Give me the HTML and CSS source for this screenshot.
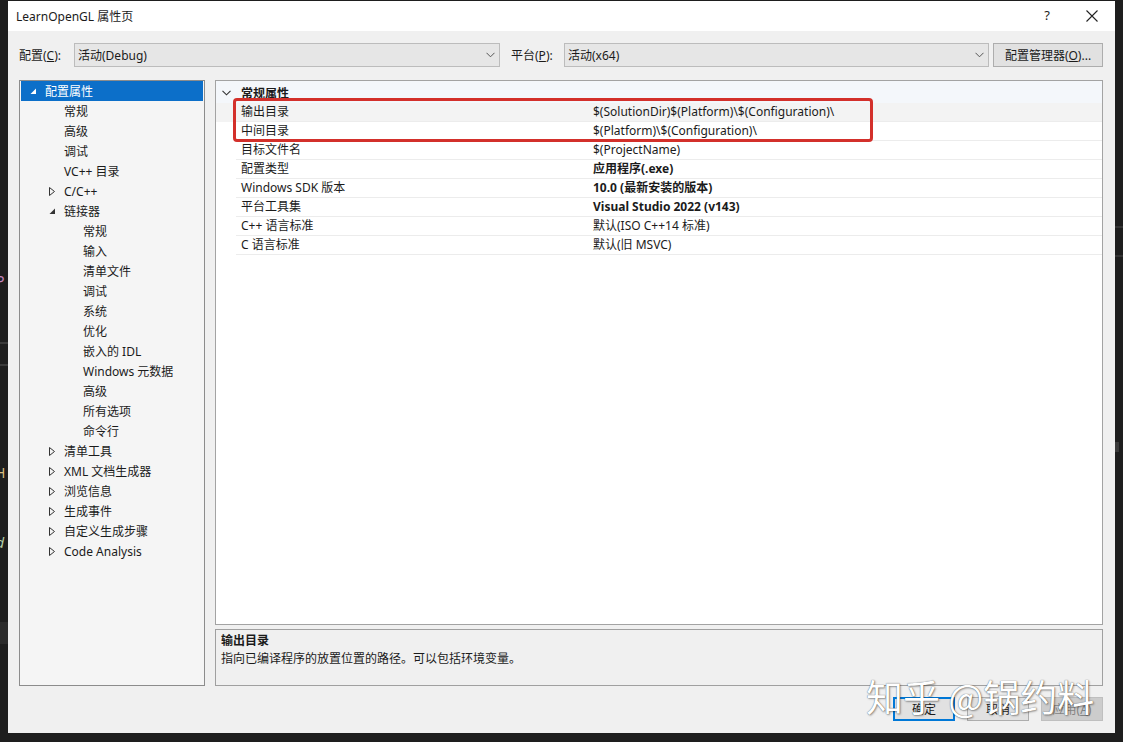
FILE: index.html
```html
<!DOCTYPE html>
<html>
  <head>
    <meta charset="utf-8">
    <title>LearnOpenGL 属性页</title>
    <link rel="stylesheet" href="styles.css">
  </head>
  <body>

    <div class="screen">

      <div class="edge edge-left">
        <span class="frag frag-p">P</span>
        <div class="eline eline-a"></div>
        <div class="eline eline-b"></div>
        <span class="frag frag-h">H</span>
        <span class="frag frag-d">d</span>
        <div class="eblock"></div>
      </div>

      <div class="dialog">

        <div class="titlebar">
          <span class="title">LearnOpenGL 属性页</span>
          <span class="tb-help">?</span>
          <span class="tb-close"><svg width="12" height="12" viewBox="0 0 12 12"><path d="M0.5 0.5 L11.5 11.5 M11.5 0.5 L0.5 11.5" stroke="#222" stroke-width="1.1" fill="none"/></svg></span>
        </div>

        <div class="content">

          <div class="config-row">
            <span class="cfg-label">配置(<u>C</u>):</span>
            <div class="combo combo-config"><span>活动(Debug)</span><svg class="chev" width="9" height="6" viewBox="0 0 9 6"><path d="M0.5 0.8 L4.5 4.8 L8.5 0.8" stroke="#555" stroke-width="1" fill="none"/></svg></div>
            <span class="cfg-label cfg-plat">平台(<u>P</u>):</span>
            <div class="combo combo-plat"><span>活动(x64)</span><svg class="chev" width="9" height="6" viewBox="0 0 9 6"><path d="M0.5 0.8 L4.5 4.8 L8.5 0.8" stroke="#555" stroke-width="1" fill="none"/></svg></div>
            <button class="btn btn-manager">配置管理器(<u>O</u>)...</button>
          </div>

          <div class="main">

            <ul class="tree">
              <li class="node lv0 selected"><span class="twisty"><svg width="7" height="7" viewBox="0 0 7 7"><path d="M6 0.5 L6 6 L0.5 6 Z" fill="#fff"/></svg></span>配置属性</li>
              <li class="node lv1"><span class="twisty"></span>常规</li>
              <li class="node lv1"><span class="twisty"></span>高级</li>
              <li class="node lv1"><span class="twisty"></span>调试</li>
              <li class="node lv1"><span class="twisty"></span>VC++ 目录</li>
              <li class="node lv1"><span class="twisty"><svg width="7" height="9" viewBox="0 0 7 9"><path d="M0.5 0.5 L5.5 4.5 L0.5 8.5 Z" fill="none" stroke="#333" stroke-width="1"/></svg></span>C/C++</li>
              <li class="node lv1"><span class="twisty"><svg width="7" height="7" viewBox="0 0 7 7"><path d="M6 0.5 L6 6 L0.5 6 Z" fill="#333"/></svg></span>链接器</li>
              <li class="node lv2"><span class="twisty"></span>常规</li>
              <li class="node lv2"><span class="twisty"></span>输入</li>
              <li class="node lv2"><span class="twisty"></span>清单文件</li>
              <li class="node lv2"><span class="twisty"></span>调试</li>
              <li class="node lv2"><span class="twisty"></span>系统</li>
              <li class="node lv2"><span class="twisty"></span>优化</li>
              <li class="node lv2"><span class="twisty"></span>嵌入的 IDL</li>
              <li class="node lv2"><span class="twisty"></span>Windows 元数据</li>
              <li class="node lv2"><span class="twisty"></span>高级</li>
              <li class="node lv2"><span class="twisty"></span>所有选项</li>
              <li class="node lv2"><span class="twisty"></span>命令行</li>
              <li class="node lv1"><span class="twisty"><svg width="7" height="9" viewBox="0 0 7 9"><path d="M0.5 0.5 L5.5 4.5 L0.5 8.5 Z" fill="none" stroke="#333" stroke-width="1"/></svg></span>清单工具</li>
              <li class="node lv1"><span class="twisty"><svg width="7" height="9" viewBox="0 0 7 9"><path d="M0.5 0.5 L5.5 4.5 L0.5 8.5 Z" fill="none" stroke="#333" stroke-width="1"/></svg></span>XML 文档生成器</li>
              <li class="node lv1"><span class="twisty"><svg width="7" height="9" viewBox="0 0 7 9"><path d="M0.5 0.5 L5.5 4.5 L0.5 8.5 Z" fill="none" stroke="#333" stroke-width="1"/></svg></span>浏览信息</li>
              <li class="node lv1"><span class="twisty"><svg width="7" height="9" viewBox="0 0 7 9"><path d="M0.5 0.5 L5.5 4.5 L0.5 8.5 Z" fill="none" stroke="#333" stroke-width="1"/></svg></span>生成事件</li>
              <li class="node lv1"><span class="twisty"><svg width="7" height="9" viewBox="0 0 7 9"><path d="M0.5 0.5 L5.5 4.5 L0.5 8.5 Z" fill="none" stroke="#333" stroke-width="1"/></svg></span>自定义生成步骤</li>
              <li class="node lv1"><span class="twisty"><svg width="7" height="9" viewBox="0 0 7 9"><path d="M0.5 0.5 L5.5 4.5 L0.5 8.5 Z" fill="none" stroke="#333" stroke-width="1"/></svg></span>Code Analysis</li>
            </ul>

            <div class="right">
              <div class="grid">
                <div class="cat"><span class="gutter"><svg width="9" height="6" viewBox="0 0 9 6"><path d="M0.5 0.8 L4.5 4.8 L8.5 0.8" stroke="#333" stroke-width="1.1" fill="none"/></svg></span><span class="cat-name">常规属性</span></div>
                <div class="prow sel"><span class="gutter"></span><span class="pname">输出目录</span><span class="pval">$(SolutionDir)$(Platform)\$(Configuration)\</span></div>
                <div class="prow"><span class="gutter"></span><span class="pname">中间目录</span><span class="pval">$(Platform)\$(Configuration)\</span></div>
                <div class="prow"><span class="gutter"></span><span class="pname">目标文件名</span><span class="pval">$(ProjectName)</span></div>
                <div class="prow"><span class="gutter"></span><span class="pname">配置类型</span><span class="pval bold">应用程序(.exe)</span></div>
                <div class="prow"><span class="gutter"></span><span class="pname">Windows SDK 版本</span><span class="pval bold">10.0 (最新安装的版本)</span></div>
                <div class="prow"><span class="gutter"></span><span class="pname">平台工具集</span><span class="pval bold">Visual Studio 2022 (v143)</span></div>
                <div class="prow"><span class="gutter"></span><span class="pname">C++ 语言标准</span><span class="pval">默认(ISO C++14 标准)</span></div>
                <div class="prow"><span class="gutter"></span><span class="pname">C 语言标准</span><span class="pval">默认(旧 MSVC)</span></div>
                <div class="redbox"></div>
              </div>
              <div class="desc">
                <div class="desc-title">输出目录</div>
                <div class="desc-text">指向已编译程序的放置位置的路径。可以包括环境变量。</div>
              </div>
            </div>

          </div>

          <div class="buttons">
            <button class="btn btn-ok">确定</button>
            <button class="btn">取消</button>
            <button class="btn btn-off">应用(<u>A</u>)</button>
          </div>

        </div>
      </div>

      <div class="edge edge-right">
        <div class="eline eline-c"></div>
        <div class="eline eline-d"></div>
        <div class="emark"></div>
      </div>

      <div class="watermark">知乎 @锅约料</div>

    </div>

  </body>
</html>
```

FILE: styles.css
```css
* { box-sizing: border-box; }

body                 { margin: 0; background-color: #1e1e1e; font-family: "Noto Sans", "Noto Sans CJK SC", sans-serif; font-size: 12px; color: #1b1b1b; overflow: hidden; }

.screen              { display: flex; width: 1123px; height: 742px; position: relative; overflow: hidden; }

/* dark editor behind the dialog */
.edge                { background-color: #1e1e1e; overflow: hidden; display: flex; flex-direction: column; }
.edge-left           { width: 8px; flex: none; }
.edge-right          { width: 8px; flex: none; }

.frag                { display: block; font-size: 14px; line-height: 14px; margin-left: -4px; font-family: "Noto Sans", sans-serif; }
.frag-p              { margin-top: 274px; color: #c586c0; }
.frag-h              { margin-top: 100px; color: #d7ba7d; margin-left: -5px; }
.frag-d              { margin-top: 56px; color: #b5cea8; font-style: italic; }
.eline               { height: 2px; background-color: #3a3a3a; }
.eline-a             { margin-top: 54px; }
.eline-b             { margin-top: 20px; }
.eblock              { margin-top: 72px; height: 22px; background-color: #2b2b2b; }
.eline-c             { margin-top: 226px; background-color: #333; }
.eline-d             { margin-top: 27px; background-color: #333; }
.emark               { margin-top: 185px; height: 10px; width: 4px; background-color: #3a3a3a; }

/* dialog */
.dialog              { width: 1107px; height: 732px; margin-top: 1px; background-color: #f0f0f0; display: flex; flex-direction: column; }

.titlebar            { height: 30px; background-color: #fff; display: flex; align-items: center; padding: 0 17px 0 8px; }
.title               { flex: 1; }
.tb-help             { font-size: 13px; margin-right: 36px; margin-top: -2px; }
.tb-close            { display: flex; }

.content             { flex: 1; display: flex; flex-direction: column; }

.config-row          { display: flex; align-items: center; height: 24px; margin-top: 12px; padding-left: 11px; }
.cfg-label           { width: 55px; }
.cfg-plat            { width: 53px; margin-left: 11px; }
.combo               { height: 24px; background-color: #e6e6e6; border: 1px solid #bcbcbc; display: flex; align-items: center; padding: 0 4px 0 3px; }
.combo span          { flex: 1; }
.combo-config        { width: 426px; }
.combo-plat          { width: 425px; }

.btn                 { font-family: inherit; font-size: 12px; color: #1b1b1b; height: 24px; background-color: #e1e1e1; border: 1px solid #adadad; padding: 0; margin: 0; }
.btn-manager         { width: 110px; margin-left: 4px; }

.main                { display: flex; height: 606px; margin-top: 13px; padding-left: 11px; }

.tree                { list-style: none; margin: 0; padding: 0 1px 1px 1px; width: 186px; background-color: #f5f5f5; border: 1px solid #8c8c8c; margin-right: 10px; }
.node                { height: 20px; display: flex; align-items: center; }
.node.selected       { background-color: #0c6fc9; color: #fff; }
.lv0                 { padding-left: 5px; }
.lv1                 { padding-left: 24px; }
.lv2                 { padding-left: 43px; }
.twisty              { width: 19px; height: 20px; display: flex; align-items: center; padding-left: 4px; flex: none; }

.right               { width: 888px; display: flex; flex-direction: column; }

.grid                { height: 545px; background-color: #fff; border: 1px solid #a3a3a3; position: relative; }
.cat                 { height: 22px; display: flex; align-items: center; background-color: #f4f7fb; padding-top: 1px; }
.gutter              { width: 20px; height: 100%; display: flex; align-items: center; justify-content: center; flex: none; }
.cat-name            { padding-left: 5px; font-weight: bold; }
.prow                { height: 19px; display: flex; align-items: center; }
.prow.sel            { background-color: #f3f3f3; }
.prow .pname,
.prow .pval          { height: 19px; line-height: 18px; border-bottom: 1px solid #ececec; }
.pname               { width: 352px; padding-left: 5px; }
.pval                { flex: 1; padding-left: 5px; }
.pval.bold           { font-weight: bold; }

.redbox              { position: absolute; left: 17px; top: 17px; width: 640px; height: 44px; border: 3px solid #d3302b; border-radius: 4px; }

.desc                { height: 57px; margin-top: 4px; border: 1px solid #a0a0a0; background-color: #f0f0f0; padding: 2px 5px; line-height: 18px; }
.desc-title          { font-weight: bold; }

.buttons             { display: flex; justify-content: flex-end; gap: 12px; height: 24px; margin-top: 11px; padding-right: 12px; }
.buttons .btn        { width: 62px; }
.btn-ok              { border: 2px solid #0078d7; }
.btn-off             { background-color: #cccccc; border-color: #bfbfbf; color: #838383; }

/* watermark over the dialog */
.watermark           { position: absolute; left: 866px; top: 676px; font-family: "Noto Sans CJK SC", sans-serif; font-size: 37px; line-height: 40px; color: #fff; text-shadow: 0 0 1px rgba(0, 0, 0, 0.7), 1px 1px 2px rgba(0, 0, 0, 0.35); white-space: nowrap; }
```
